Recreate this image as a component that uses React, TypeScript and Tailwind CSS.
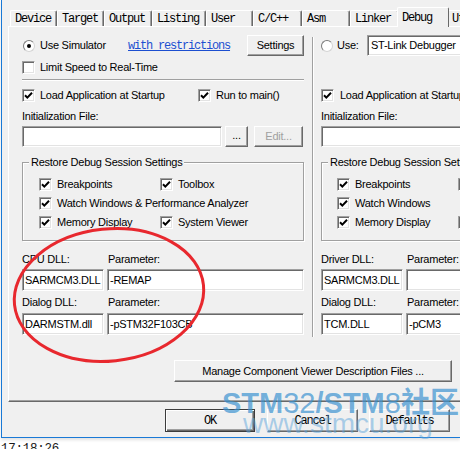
import type { ReactNode } from 'react'

const sans = "font-['Liberation_Sans',Arial,sans-serif] text-[11px] tracking-[-0.25px]"
const mono = "font-['Liberation_Mono','Courier_New',monospace] text-[12px] tracking-[-1.2px]"

const raised =
  'border border-t-white border-l-white border-b-[#696969] border-r-[#696969] shadow-[inset_-1px_-1px_0_#a0a0a0]'
const raisedDefault =
  'border border-[#3c3c3c] shadow-[inset_1px_1px_0_#fff,inset_-1px_-1px_0_#696969,inset_-2px_-2px_0_#a0a0a0]'
const sunken =
  'bg-white border border-t-[#a0a0a0] border-l-[#a0a0a0] border-b-white border-r-white shadow-[inset_1px_1px_0_#696969,inset_-1px_-1px_0_#e3e3e3]'

const tabs = [
  { label: 'Device', w: 'w-[47px]' },
  { label: 'Target', w: 'w-[47px]' },
  { label: 'Output', w: 'w-[48px]' },
  { label: 'Listing', w: 'w-[54px]' },
  { label: 'User', w: 'w-[47px]' },
  { label: 'C/C++', w: 'w-[49px]' },
  { label: 'Asm', w: 'w-[48px]' },
  { label: 'Linker', w: 'w-[49px]' },
  { label: 'Debug', w: 'w-[52px]', active: true },
  { label: 'Utilities', w: 'w-[70px]' },
]

function Check({ on = true }: { on?: boolean }) {
  return (
    <span className={`${sunken} flex h-[13px] w-[13px] shrink-0 items-center justify-center`}>
      {on && (
        <svg viewBox="0 0 11 11" className="h-[11px] w-[11px]">
          <path d="M2 5.3 4.3 7.6 9 2.8" fill="none" stroke="#000" strokeWidth="2" />
        </svg>
      )}
    </span>
  )
}

function Radio({ on = false, className = '' }: { on?: boolean; className?: string }) {
  return (
    <span
      className={`flex h-[12px] w-[12px] shrink-0 items-center justify-center rounded-full border border-t-[#7a7a7a] border-l-[#7a7a7a] border-b-[#d4d4d4] border-r-[#d4d4d4] bg-white ${className}`}
    >
      {on && <span className="h-[4px] w-[4px] rounded-full bg-black" />}
    </span>
  )
}

function Btn({
  children,
  className = '',
  def = false,
  disabled = false,
}: {
  children: ReactNode
  className?: string
  def?: boolean
  disabled?: boolean
}) {
  return (
    <div
      className={`flex shrink-0 items-center justify-center bg-[#f0f0f0] ${def ? raisedDefault : raised} ${disabled ? 'text-[#a0a0a0]' : ''} ${className}`}
    >
      {children}
    </div>
  )
}

function Field({ value = '', className = '' }: { value?: string; className?: string }) {
  return <div className={`${sunken} flex items-center overflow-hidden whitespace-nowrap pl-[2px] ${className}`}>{value}</div>
}

function Item({ label, on = true, gap = 'ml-[5px]' }: { label: string; on?: boolean; gap?: string }) {
  return (
    <>
      <Check on={on} />
      <span className={`${gap} whitespace-nowrap`}>{label}</span>
    </>
  )
}

function Group({ pad, rows }: { pad: string; rows: [string, string?][] }) {
  return (
    <fieldset className="mt-[8px] border border-[#a0a0a0] shadow-[inset_1px_1px_0_#fff,1px_1px_0_#fff]">
      <legend className="ml-[6px] whitespace-nowrap bg-[#f0f0f0] px-[2px] leading-[14px]">
        Restore Debug Session Settings
      </legend>
      <div className={`${pad} pb-[8px] pt-[6px]`}>
        {rows.map(([a, b]) => (
          <div key={a} className="flex h-[19px] items-center">
            <div className="flex w-[121px] shrink-0 items-center">
              <Item label={a} />
            </div>
            {b !== undefined && <Item label={b} />}
          </div>
        ))}
      </div>
    </fieldset>
  )
}

function DllRows({ first, dll1, par1, dll2, par2 }: { first: string; dll1: string; par1: string; dll2: string; par2: string }) {
  return (
    <>
      <div className="mt-[11px] flex h-[17px] leading-[14px]">
        <span className="w-[86px]">{first}</span>
        <span>Parameter:</span>
      </div>
      <div className="flex h-[22px]">
        <Field className="w-[82px]" value={dll1} />
        <Field className="ml-[3px] flex-1" value={par1} />
      </div>
      <div className="flex h-[22px] pt-[4px] leading-[14px]">
        <span className="w-[86px]">Dialog DLL:</span>
        <span>Parameter:</span>
      </div>
      <div className="flex h-[22px]">
        <Field className="w-[82px]" value={dll2} />
        <Field className="ml-[3px] flex-1" value={par2} />
      </div>
    </>
  )
}

export default function App() {
  return (
    <div className={`relative h-[449px] w-[460px] overflow-hidden bg-white text-black ${sans}`}>
      <div className="ml-[1px] h-[438px] w-[459px] overflow-hidden border-b border-l border-[#1979d6] bg-[#f0f0f0] shadow-[0_2px_3px_rgba(0,0,0,0.12)]">
        {/* tab strip */}
        <div className="flex h-[26px] items-end pl-[8px]">
          {tabs.map((t) => (
            <div
              key={t.label}
              className={`${mono} ${t.w} shrink-0 rounded-t-[2px] border-l border-r border-t border-l-white border-r-[#696969] border-t-white pl-[4px] leading-[14px] ${
                t.active
                  ? 'relative z-10 -mx-[2px] -mb-px h-[20px] bg-[#f0f0f0] pt-[3px]'
                  : 'h-[16px] pt-[1px] shadow-[inset_-1px_0_0_#a0a0a0]'
              }`}
            >
              {t.label}
            </div>
          ))}
        </div>

        {/* Debug page */}
        <div className="ml-[6px] w-[480px] border-b border-l border-t border-b-[#696969] border-l-white border-t-white pb-[19px] pl-[13px] pt-[8px] shadow-[inset_0_-1px_0_#a0a0a0]">
          <div className="flex">
            {/* simulator side */}
            <div className="flex w-[282px] shrink-0 flex-col">
              <div className="flex h-[21px] items-center">
                <Radio on className="ml-[1px]" />
                <span className="ml-[5px] w-[88px]">Use Simulator</span>
                <span className={`${mono} text-[#1c4fd0] underline`}>with restrictions</span>
                <Btn className="ml-auto h-[21px] w-[57px]">Settings</Btn>
              </div>
              <div className="flex h-[22px] items-center">
                <Item label="Limit Speed to Real-Time" on={false} />
              </div>
              <div className="mt-[1px] h-[2px] border-b border-t border-b-white border-t-[#a0a0a0]" />
              <div className="flex h-[28px] items-center">
                <Check />
                <span className="ml-[5px] w-[158px]">Load Application at Startup</span>
                <Item label="Run to main()" />
              </div>
              <div className="h-[17px] leading-[14px]">Initialization File:</div>
              <div className="flex h-[21px]">
                <Field className="w-[200px]" />
                <Btn className="ml-[3px] w-[23px] items-end pb-[3px]">...</Btn>
                <Btn disabled className="ml-[6px] w-[49px]">
                  Edit...
                </Btn>
              </div>
              <Group
                pad="pl-[16px]"
                rows={[
                  ['Breakpoints', 'Toolbox'],
                  ['Watch Windows & Performance Analyzer'],
                  ['Memory Display', 'System Viewer'],
                ]}
              />
              <DllRows first="CPU DLL:" dll1="SARMCM3.DLL" par1="-REMAP" dll2="DARMSTM.dll" par2="-pSTM32F103CB" />
            </div>

            <div className="w-[8px] shrink-0" />
            <div className="-mb-[2px] mt-[2px] w-[2px] shrink-0 border-l border-r border-l-[#a0a0a0] border-r-white" />
            <div className="w-[7px] shrink-0" />

            {/* target side */}
            <div className="flex min-w-0 flex-1 flex-col">
              <div className="flex h-[21px] items-center">
                <Radio />
                <span className="ml-[4px] w-[30px]">Use:</span>
                <Field className="h-[21px] flex-1 pl-[3px]" value="ST-Link Debugger" />
              </div>
              <div className="h-[22px]" />
              <div className="mt-[1px] h-[2px]" />
              <div className="flex h-[28px] items-center">
                <Item label="Load Application at Startup" gap="ml-[6px]" />
              </div>
              <div className="h-[17px] leading-[14px]">Initialization File:</div>
              <Field className="h-[21px]" />
              <Group
                pad="pl-[15px]"
                rows={[
                  ['Breakpoints', ''],
                  ['Watch Windows'],
                  ['Memory Display', ''],
                ]}
              />
              <DllRows first="Driver DLL:" dll1="SARMCM3.DLL" par1="" dll2="TCM.DLL" par2="-pCM3" />
            </div>
          </div>

          <Btn className="ml-[152px] mt-[25px] h-[22px] w-[278px]">Manage Component Viewer Description Files ...</Btn>
        </div>

        <div className={`${mono} mt-[7px] flex h-[23px] pl-[163px]`}>
          <Btn def className="w-[90px]">
            OK
          </Btn>
          <Btn className="ml-[12px] w-[91px]">Cancel</Btn>
          <Btn className="ml-[11px] w-[81px]">Defaults</Btn>
        </div>
      </div>

      <div className="mt-[5px] pl-[1px] font-['Liberation_Mono',monospace] text-[12.5px] leading-[13px] text-[#1a1a1a]">
        17:18:26
      </div>

      {/* site watermark */}
      <div className="pointer-events-none absolute left-[222px] top-[389px] whitespace-nowrap font-['Liberation_Sans','Noto_Sans_CJK_SC',sans-serif] tracking-normal">
        <div className="text-[29px] font-bold leading-[29px] text-[#3b92d0]/70">
          STM<span className="font-normal">32</span>/STM<span className="font-normal">8</span>社区
        </div>
        <div className="-mt-[8px] ml-[21px] text-[28px] leading-[28px] text-[#5ea6dc]/50">www.stmcu.org</div>
      </div>

      {/* hand-drawn marker */}
      <svg className="pointer-events-none absolute left-0 top-0" width="460" height="449">
        <ellipse cx="109" cy="295" rx="95" ry="66" fill="none" stroke="#e8282e" strokeWidth="3" transform="rotate(-6 109 295)" />
      </svg>
    </div>
  )
}
